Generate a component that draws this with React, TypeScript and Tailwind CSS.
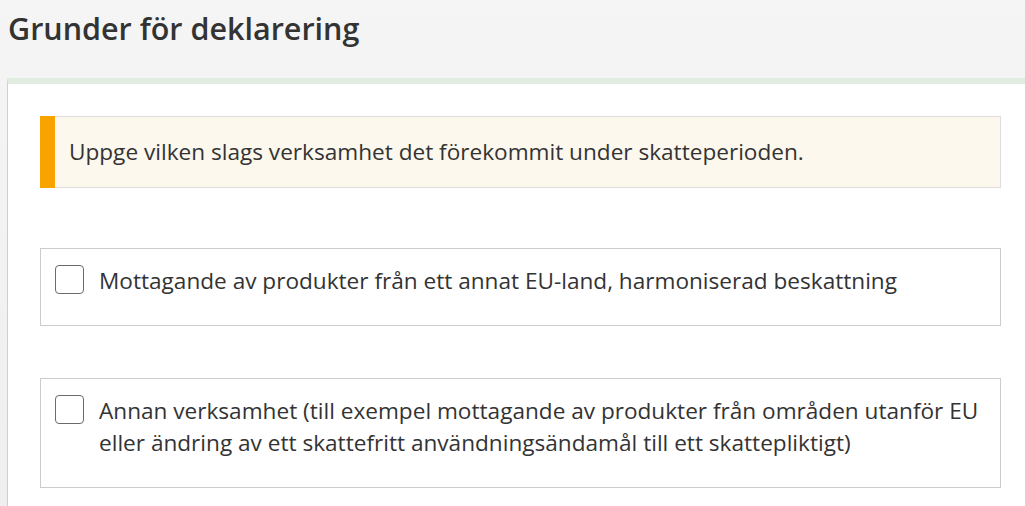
export default function App() {
  const options = [
    'Mottagande av produkter från ett annat EU-land, harmoniserad beskattning',
    'Annan verksamhet (till exempel mottagande av produkter från områden utanför EU eller ändring av ett skattefritt användningsändamål till ett skattepliktigt)',
  ];

  return (
    <div
      className="h-[506px] w-[1025px] overflow-hidden bg-gradient-to-b from-[#f5f5f5] to-[#efefef] text-[#333333]"
      style={{ fontFamily: '"Open Sans", "Noto Sans", sans-serif' }}
    >
      <h1 className="pl-2 pt-[8px] text-[30.5px] font-semibold leading-[40px]">Grunder för deklarering</h1>
      <div className="ml-[7px] mt-[30px] w-[1026px] border-l border-t-[6px] border-l-[#cfcfcf] border-t-[#e2ede2] bg-white px-8 pt-8 pb-10">
        <div className="flex h-[72px] items-center border border-[#dddddd] border-l-0 bg-[#fcf8ee]">
          <div className="h-[72px] w-[15px] -my-px shrink-0 bg-[#f9a300]" />
          <p className="pl-[14px] text-[22.6px]">Uppge vilken slags verksamhet det förekommit under skatteperioden.</p>
        </div>
        <div className="mt-[60px] flex flex-col gap-[52px]">
          {options.map((text, i) => (
            <label key={i} className="flex gap-[15px] border border-[#cccccc] bg-white pl-[14px] pr-4 pt-4 pb-[28px]">
              <span className="h-[29px] w-[29px] shrink-0 rounded-[4px] border-[1.5px] border-[#6b6b6b] bg-white" />
              <span className="text-[22.6px] leading-[32px]">{text}</span>
            </label>
          ))}
        </div>
      </div>
    </div>
  );
}
